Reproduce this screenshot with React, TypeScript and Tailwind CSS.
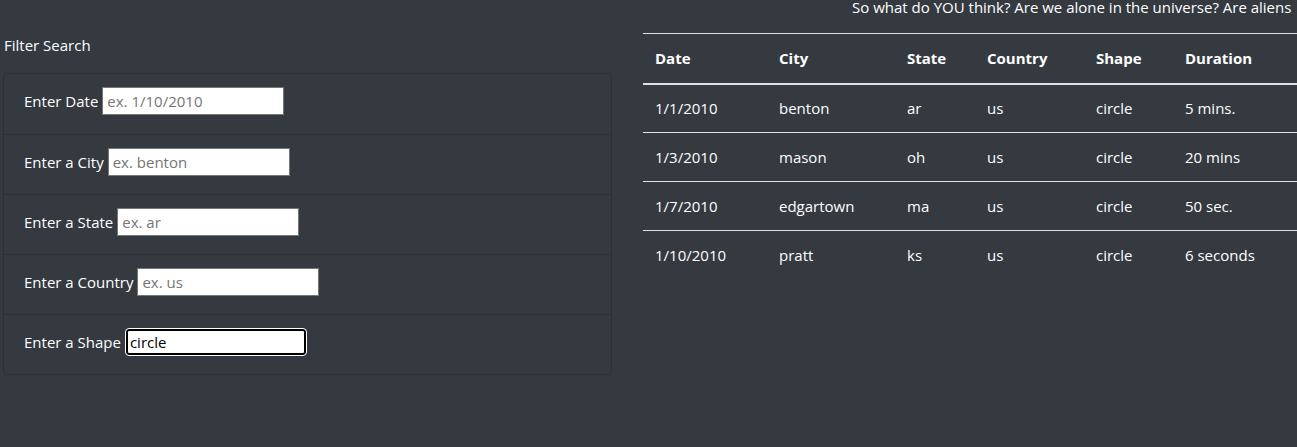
const filters = [
  { label: "Enter Date", placeholder: "ex. 1/10/2010", value: "" },
  { label: "Enter a City", placeholder: "ex. benton", value: "" },
  { label: "Enter a State", placeholder: "ex. ar", value: "" },
  { label: "Enter a Country", placeholder: "ex. us", value: "" },
  { label: "Enter a Shape", placeholder: "ex. circle", value: "circle", focused: true },
];

const rows = [
  ["1/1/2010", "benton", "ar", "us", "circle", "5 mins."],
  ["1/3/2010", "mason", "oh", "us", "circle", "20 mins"],
  ["1/7/2010", "edgartown", "ma", "us", "circle", "50 sec."],
  ["1/10/2010", "pratt", "ks", "us", "circle", "6 seconds"],
];

const headers = ["Date", "City", "State", "Country", "Shape", "Duration"];
const colWidths = ["w-[124px]", "w-[128px]", "w-[80px]", "w-[109px]", "w-[89px]", "w-[140px]"];

export default function App() {
  return (
    <div
      className="w-[1297px] h-[447px] overflow-hidden bg-[#343a40] text-white text-[15px]"
      style={{ fontFamily: '"Open Sans", "Noto Sans", sans-serif' }}
    >
      <div className="h-[14px] pl-[852px] whitespace-nowrap leading-[14px] text-[15px]">
        So what do YOU think? Are we alone in the universe? Are aliens
      </div>
      <div className="flex mt-[19px]">
        <div className="w-[612px] pl-[3px] shrink-0">
          <div className="mt-[2px] h-[20px] leading-[20px] pl-px">Filter Search</div>
          <ul className="mt-[18px] border border-[#2c3136] rounded-[3px]">
            {filters.map((f, i) => (
              <li
                key={f.label}
                className={
                  "h-[60px] flex items-start pt-[13px] pl-5 " +
                  (i > 0 ? "border-t border-[#2c3136]" : "")
                }
              >
                <label className="mr-1 h-[28px] leading-[28px]">{f.label}</label>
                {f.focused ? (
                  <input
                    type="text"
                    defaultValue={f.value}
                    placeholder={f.placeholder}
                    className="w-[180px] h-[26px] mt-px ml-px bg-white text-black border-2 border-black rounded-[3px] outline outline-1 outline-white px-[2px] text-[15px]"
                  />
                ) : (
                  <input
                    type="text"
                    placeholder={f.placeholder}
                    className="w-[182px] h-[28px] bg-white text-black border border-[#767676] px-1 text-[15px] placeholder:text-[#757575] outline-none"
                  />
                )}
              </li>
            ))}
          </ul>
        </div>
        <div className="ml-[31px] shrink-0">
          <table className="w-[700px] border-collapse text-left">
            <thead>
              <tr className="border-t border-[#dee2e6]">
                {headers.map((h, i) => (
                  <th
                    key={h}
                    className={"h-[50px] pl-3 font-bold border-b-2 border-[#dee2e6] " + colWidths[i]}
                  >
                    {h}
                  </th>
                ))}
                <th className="border-b-2 border-[#dee2e6]" />
              </tr>
            </thead>
            <tbody>
              {rows.map((r, ri) => (
                <tr key={ri} className={ri > 0 ? "border-t border-[#dee2e6]" : ""}>
                  {r.map((c, ci) => (
                    <td key={ci} className="h-[49px] pl-3">
                      {c}
                    </td>
                  ))}
                  <td />
                </tr>
              ))}
            </tbody>
          </table>
        </div>
      </div>
    </div>
  );
}
